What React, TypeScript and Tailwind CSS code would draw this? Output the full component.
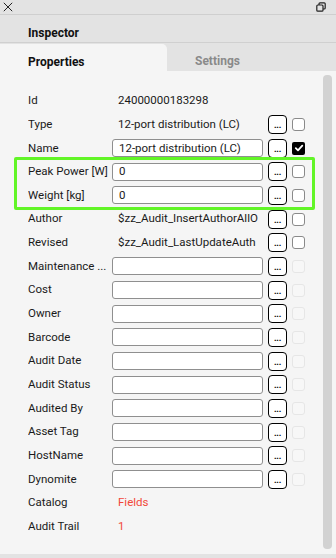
import React from "react";

type Row = {
  label: string;
  kind: "text" | "input" | "link";
  value?: string;
  btn?: boolean;
  cb?: "on" | "off" | "dis" | "none";
};

const rows: Row[] = [
  { label: "Id", kind: "text", value: "24000000183298", btn: false, cb: "none" },
  { label: "Type", kind: "text", value: "12-port distribution (LC)", btn: true, cb: "off" },
  { label: "Name", kind: "input", value: "12-port distribution (LC)", btn: true, cb: "on" },
  { label: "Peak Power [W]", kind: "input", value: "0", btn: true, cb: "off" },
  { label: "Weight [kg]", kind: "input", value: "0", btn: true, cb: "off" },
  { label: "Author", kind: "text", value: "$zz_Audit_InsertAuthorAllO", btn: true, cb: "off" },
  { label: "Revised", kind: "text", value: "$zz_Audit_LastUpdateAuth", btn: true, cb: "off" },
  { label: "Maintenance ...", kind: "input", value: "", btn: true, cb: "dis" },
  { label: "Cost", kind: "input", value: "", btn: true, cb: "dis" },
  { label: "Owner", kind: "input", value: "", btn: true, cb: "dis" },
  { label: "Barcode", kind: "input", value: "", btn: true, cb: "dis" },
  { label: "Audit Date", kind: "input", value: "", btn: true, cb: "dis" },
  { label: "Audit Status", kind: "input", value: "", btn: true, cb: "dis" },
  { label: "Audited By", kind: "input", value: "", btn: true, cb: "dis" },
  { label: "Asset Tag", kind: "input", value: "", btn: true, cb: "dis" },
  { label: "HostName", kind: "input", value: "", btn: true, cb: "dis" },
  { label: "Dynomite", kind: "input", value: "", btn: true, cb: "dis" },
  { label: "Catalog", kind: "link", value: "Fields", btn: false, cb: "none" },
  { label: "Audit Trail", kind: "link", value: "1", btn: false, cb: "none" },
];

function Check({ state }: { state: Row["cb"] }) {
  if (state === "none") return <div className="w-[13px] h-[13px]" />;
  if (state === "on")
    return (
      <div className="w-[13px] h-[13px] rounded-[2px] bg-black flex items-center justify-center">
        <svg width="10" height="10" viewBox="0 0 10 10">
          <path d="M1.8 5.2 L4 7.4 L8.3 2.6" fill="none" stroke="white" strokeWidth="1.8" strokeLinecap="round" strokeLinejoin="round" />
        </svg>
      </div>
    );
  if (state === "dis")
    return <div className="w-[13px] h-[13px] rounded-[3px] border border-[#e6e6e6] bg-[#f7f7f7]" />;
  return <div className="w-[13px] h-[13px] rounded-[3px] border border-[#8a8a8a] bg-white" />;
}

function RowView({ r }: { r: Row }) {
  return (
    <div className="flex items-center h-[23.67px]">
      <div className="w-[84px] whitespace-nowrap overflow-hidden text-[11.5px] text-[#1a1a1a]">{r.label}</div>
      <div className="w-[151px] h-[18px] flex items-center">
        {r.kind === "input" ? (
          <div className="w-full h-[18px] rounded-[3px] border border-[#8f8f8f] bg-white flex items-center px-[6px] text-[11.5px] text-[#1a1a1a] overflow-hidden whitespace-nowrap">
            {r.value}
          </div>
        ) : r.kind === "link" ? (
          <div className="pl-[6px] text-[11.5px] text-[#f2473a] whitespace-nowrap">{r.value}</div>
        ) : (
          <div className="pl-[6px] w-full text-[11.5px] text-[#1a1a1a] overflow-hidden whitespace-nowrap">{r.value}</div>
        )}
      </div>
      <div className="w-[5px]" />
      {r.btn ? (
        <div className="w-[19px] h-[19px] rounded-[4px] border border-black bg-white flex items-end justify-center pb-[4px]">
          <span className="text-[9px] leading-[8px] font-bold text-black tracking-[-0.3px]">...</span>
        </div>
      ) : (
        <div className="w-[19px]" />
      )}
      <div className="w-[5px]" />
      <Check state={r.cb} />
    </div>
  );
}

export default function App() {
  return (
    <div
      className="w-[336px] h-[558px] bg-[#e3e3e3] flex flex-col overflow-hidden"
      style={{ fontFamily: "Roboto, 'Liberation Sans', sans-serif" }}
    >
      {/* title bar */}
      <div className="h-[15px] border-b border-[#cfcfcf] flex items-center justify-between px-[3px] shrink-0">
        <svg width="10" height="10" viewBox="0 0 10 10">
          <path d="M0.8 0.8 L9.2 9.2 M9.2 0.8 L0.8 9.2" stroke="#222" strokeWidth="1" />
        </svg>
        <svg width="10" height="10" viewBox="0 0 10 10" className="mr-[7px]">
          <rect x="3" y="0.8" width="6.2" height="6.2" rx="1" fill="none" stroke="#222" strokeWidth="1.2" />
          <rect x="0.8" y="3" width="6.2" height="6.2" rx="1" fill="#e3e3e3" stroke="#222" strokeWidth="1.2" />
        </svg>
      </div>
      {/* header */}
      <div className="h-[28px] border-b border-[#d0d0d0] flex items-center pt-[8px] pl-[28px] shrink-0">
        <span className="text-[12px] font-bold text-[#111]">Inspector</span>
      </div>
      {/* tabs */}
      <div className="h-[28px] flex shrink-0 pt-[1px]">
        <div className="w-[167px] bg-[#f5f5f5] rounded-tr-[5px] flex items-center pt-[8px] pl-[28px]">
          <span className="text-[12px] font-bold text-[#111]">Properties</span>
        </div>
        <div className="flex-1 flex items-center pt-[6px] pl-[28px]">
          <span className="text-[12px] font-bold text-[#8a8a8a]">Settings</span>
        </div>
      </div>
      {/* content */}
      <div className="flex-1 bg-[#f5f5f5] flex min-h-0">
        <div className="flex-1 pl-[28px] pt-[18px]">
          {rows.slice(0, 3).map((r) => (
            <RowView key={r.label} r={r} />
          ))}
          <div className="relative">
            <div className="absolute left-[-14px] right-[8px] top-[-3px] bottom-[-3px] border-[3px] border-[#62f527] rounded-[2px] pointer-events-none" />
            {rows.slice(3, 5).map((r) => (
              <RowView key={r.label} r={r} />
            ))}
          </div>
          {rows.slice(5).map((r) => (
            <RowView key={r.label} r={r} />
          ))}
        </div>
        <div className="w-[13px] pr-[4px] pt-[4px] pb-[5px] flex">
          <div className="w-[9px] rounded-[4px] bg-[#d2d2d2]" />
        </div>
      </div>
      <div className="h-[4px] bg-[#e3e3e3] shrink-0" />
    </div>
  );
}
